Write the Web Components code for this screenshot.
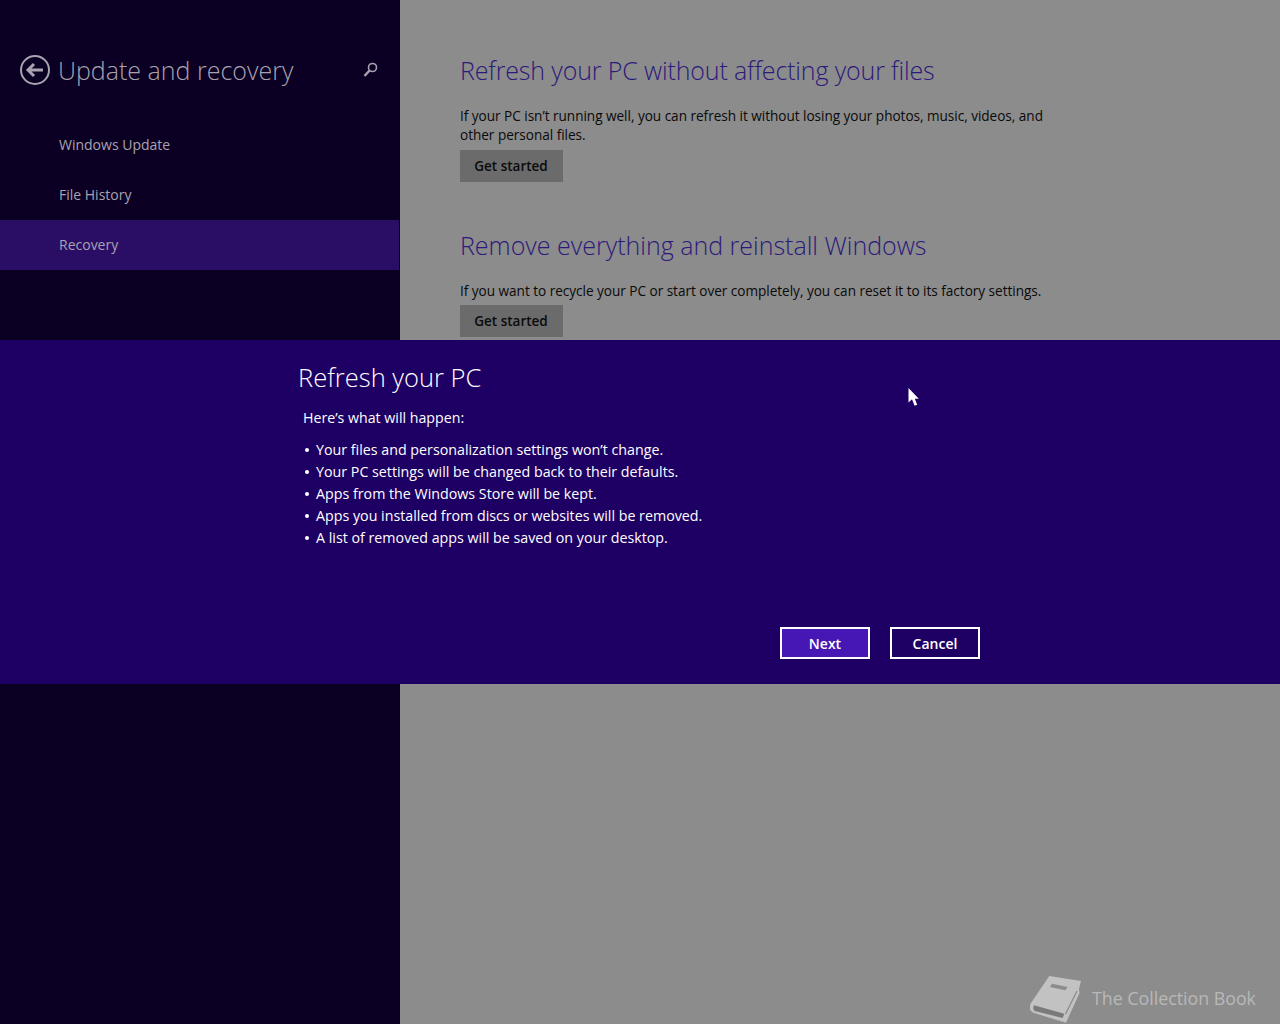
<!DOCTYPE html>
<html>
<head>
<meta charset="utf-8">
<title>Update and recovery</title>
<style>
    html, body { margin: 0; height: 100%; }
    body { font-family: "Open Sans", "Noto Sans", sans-serif; overflow: hidden; }
</style>
</head>
<body>
<settings-screen>
    <settings-sidebar slot="side" heading="Update and recovery">
        <nav-item>Windows Update</nav-item>
        <nav-item>File History</nav-item>
        <nav-item selected>Recovery</nav-item>
    </settings-sidebar>
    <recovery-section slot="main" style="--heading-track:-.14px" heading="Refresh your PC without affecting your files">If your PC isn’t running well, you can refresh it without losing your photos, music, videos, and other personal files.</recovery-section>
    <recovery-section slot="main" style="--button-gap:5px" heading="Remove everything and reinstall Windows">If you want to recycle your PC or start over completely, you can reset it to its factory settings.</recovery-section>
    <refresh-dialog slot="overlay" heading="Refresh your PC" intro="Here’s what will happen:">
        <li>Your files and personalization settings won’t change.</li>
        <li>Your PC settings will be changed back to their defaults.</li>
        <li>Apps from the Windows Store will be kept.</li>
        <li>Apps you installed from discs or websites will be removed.</li>
        <li>A list of removed apps will be saved on your desktop.</li>
    </refresh-dialog>
    <book-watermark slot="overlay">The Collection Book</book-watermark>
    <mouse-cursor slot="overlay"></mouse-cursor>
</settings-screen>

<script>
class SettingsScreen extends HTMLElement {
    connectedCallback() {
        this.attachShadow({ mode: 'open' });
        this.shadowRoot.innerHTML = `
            <style>
                :host {
                    display: grid;
                    grid-template-columns: 400px 1fr;
                    position: relative;
                    width: 1280px;
                    height: 1024px;
                    overflow: hidden;
                    background: #8c8c8c;
                }
                .side { background: #0b0023; }
                .main { padding: 0 0 0 60px; }
            </style>
            <div class="side"><slot name="side"></slot></div>
            <div class="main"><slot name="main"></slot></div>
            <slot name="overlay"></slot>
        `;
    }
}

class SettingsSidebar extends HTMLElement {
    connectedCallback() {
        const heading = this.getAttribute('heading');
        this.attachShadow({ mode: 'open' });
        this.shadowRoot.innerHTML = `
            <style>
                :host { display: block; padding-top: 50px; }
                .head {
                    display: flex;
                    align-items: center;
                    height: 40px;
                    padding-left: 20px;
                    color: #a8a3b0;
                }
                .back { width: 30px; height: 30px; margin-right: 8px; flex: none; }
                h1 {
                    margin: 0;
                    font-size: 25px;
                    font-weight: 300;
                    white-space: nowrap;
                    flex: 1;
                }
                .search { width: 16px; height: 16px; margin-right: 21px; flex: none; }
                .list { margin-top: 30px; }
            </style>
            <div class="head">
                <svg class="back" viewBox="0 0 30 30" fill="none" stroke="currentColor">
                    <circle cx="15" cy="15" r="14" stroke-width="2"/>
                    <path d="M23 15H9M14 9l-6 6 6 6" stroke-width="3"/>
                </svg>
                <h1>${heading}</h1>
                <svg class="search" viewBox="0 0 16 16" fill="none" stroke="currentColor">
                    <circle cx="9.5" cy="5.5" r="4" stroke-width="1.6"/>
                    <path d="M6.5 8.5l-5 5.5" stroke-width="2.4"/>
                </svg>
            </div>
            <div class="list"><slot></slot></div>
        `;
    }
}

class NavItem extends HTMLElement {
    connectedCallback() {
        this.attachShadow({ mode: 'open' });
        this.shadowRoot.innerHTML = `
            <style>
                :host {
                    display: flex;
                    align-items: center;
                    box-sizing: border-box;
                    height: 50px;
                    margin-right: 1px;
                    padding: 0 0 2px 59px;
                    font-size: 14px;
                    color: #a8a3b0;
                }
                :host([selected]) { background: #2a0e66; }
            </style>
            <slot></slot>
        `;
    }
}

class RecoverySection extends HTMLElement {
    connectedCallback() {
        const heading = this.getAttribute('heading');
        this.attachShadow({ mode: 'open' });
        this.shadowRoot.innerHTML = `
            <style>
                :host { display: block; width: 600px; height: 175px; padding-top: 50px; margin-bottom: -50px; color: #0a0a0a; }
                h2 {
                    margin: 0 0 16px;
                    height: 40px;
                    line-height: 40px;
                    font-size: 25px;
                    font-weight: 300;
                    letter-spacing: var(--heading-track, 0);
                    color: #2b1a7a;
                    white-space: nowrap;
                }
                p { margin: 0; font-size: 13.6px; letter-spacing: -.03px; line-height: 19px; }
                button {
                    display: block;
                    width: 103px;
                    height: 32px;
                    margin-top: var(--button-gap, 6px);
                    padding: 0 1px 0 0;
                    border: 0;
                    background: #6b6b6b;
                    color: #0a0a0a;
                    font: 600 13.5px "Open Sans", sans-serif;
                }
            </style>
            <h2>${heading}</h2>
            <p><slot></slot></p>
            <button>Get started</button>
        `;
    }
}

class RefreshDialog extends HTMLElement {
    connectedCallback() {
        const heading = this.getAttribute('heading');
        const intro = this.getAttribute('intro');
        this.attachShadow({ mode: 'open' });
        this.shadowRoot.innerHTML = `
            <style>
                :host {
                    display: block;
                    position: absolute;
                    left: 0;
                    top: 340px;
                    box-sizing: border-box;
                    width: 1280px;
                    height: 344px;
                    padding: 18px 300px 0 298px;
                    background: #1e0064;
                    color: #fff;
                }
                h2 { margin: 0; font-size: 25.5px; font-weight: 300; line-height: 38px; }
                p { margin: 11px 0 10px 5px; font-size: 14.2px; line-height: 22px; }
                ul { margin: 0; padding: 0 0 0 7px; font-size: 14.25px; line-height: 22px; }
                ::slotted(li) { display: flex; align-items: center; }
                ::slotted(li)::before {
                    content: '';
                    flex: none;
                    width: 4px;
                    height: 4px;
                    margin-right: 7px;
                    border-radius: 50%;
                    background: #fff;
                }
                .actions {
                    display: flex;
                    justify-content: flex-end;
                    gap: 20px;
                    margin-top: 78px;
                }
                button {
                    box-sizing: border-box;
                    width: 90px;
                    height: 32px;
                    padding: 0;
                    border: 2px solid #fff;
                    background: transparent;
                    color: #fff;
                    font: 600 14px "Open Sans", sans-serif;
                }
                button.primary { background: #4617b4; }
            </style>
            <h2>${heading}</h2>
            <p>${intro}</p>
            <ul><slot></slot></ul>
            <div class="actions">
                <button class="primary">Next</button>
                <button>Cancel</button>
            </div>
        `;
    }
}

class BookWatermark extends HTMLElement {
    connectedCallback() {
        this.attachShadow({ mode: 'open' });
        this.shadowRoot.innerHTML = `
            <style>
                :host {
                    display: flex;
                    align-items: center;
                    gap: 10px;
                    position: absolute;
                    left: 1030px;
                    top: 976px;
                    color: #b8b8b8;
                    font-size: 17.8px;
                    white-space: nowrap;
                }
                span { margin-top: -3px; }
                svg { width: 52px; height: 47px; flex: none; }
            </style>
            <svg viewBox="0 0 52 47">
                <path fill="#c2c2c2" d="M19.3 0 51 5 49 13 49.5 17 36 46.7 4 37C-1 35-1 30 1 27Z"/>
                <path fill="#7a7a7a" d="M4 29.3 34.3 37.7 32.7 42 4.7 35C3 34 3 31 4 29.3Z"/>
                <path fill="#8c8c8c" d="M22 7.7 37.7 11 35.3 14.3 20 11Z"/>
                <path fill="none" stroke="#8c8c8c" stroke-width="1.2" d="M47 15 35.5 38"/>
            </svg>
            <span><slot></slot></span>
        `;
    }
}

class MouseCursor extends HTMLElement {
    connectedCallback() {
        this.attachShadow({ mode: 'open' });
        this.shadowRoot.innerHTML = `
            <style>
                :host { display: block; position: absolute; left: 908px; top: 388px; width: 12px; height: 19px; }
                svg { display: block; }
            </style>
            <svg width="12" height="19" viewBox="0 0 12 19">
                <path d="M.5 0V14.5L4 11.2 6.6 17.8 9.2 16.8 6.8 10.8H10.8Z" fill="#fff"/>
            </svg>
        `;
    }
}

customElements.define('settings-screen', SettingsScreen);
customElements.define('settings-sidebar', SettingsSidebar);
customElements.define('nav-item', NavItem);
customElements.define('recovery-section', RecoverySection);
customElements.define('refresh-dialog', RefreshDialog);
customElements.define('book-watermark', BookWatermark);
customElements.define('mouse-cursor', MouseCursor);
</script>
</body>
</html>
